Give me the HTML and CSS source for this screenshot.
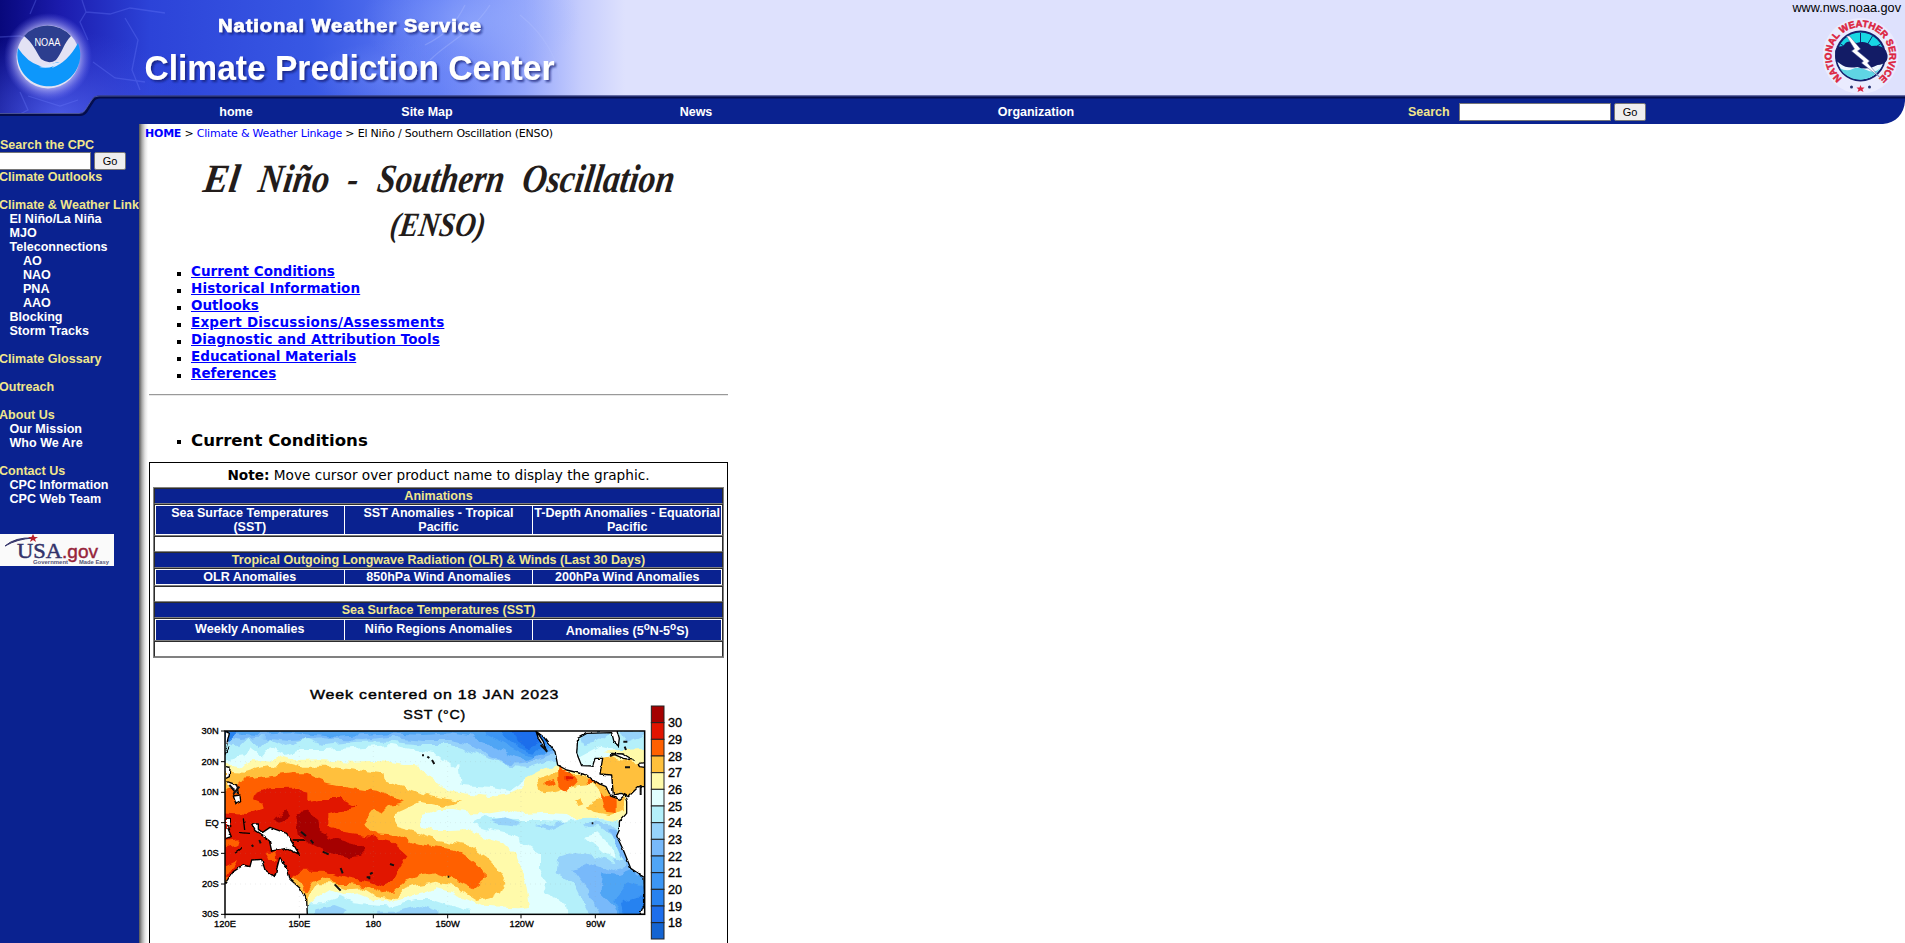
FILE: index.html
```html
<!DOCTYPE html>
<html lang="en">
<head>
<meta charset="utf-8">
<title>Climate Prediction Center - ENSO</title>
<link rel="stylesheet" href="styles.css">
</head>
<body>
<header class="header">
  <svg class="art" width="1905" height="124" viewBox="0 0 1905 124">
    <defs>
      <linearGradient id="sky" x1="0" x2="1">
        <stop offset="0" stop-color="#08087c"/><stop offset=".1" stop-color="#1c1cae"/><stop offset=".24" stop-color="#2c43d8"/>
        <stop offset=".5" stop-color="#3858e4"/><stop offset=".7" stop-color="#5f7bf5"/><stop offset=".84" stop-color="#93a5fb"/>
        <stop offset=".93" stop-color="#c6cdfd"/><stop offset="1" stop-color="#dee1fd"/>
      </linearGradient>
      <radialGradient id="low"><stop offset="0" stop-color="#5264ee" stop-opacity=".85"/><stop offset="1" stop-color="#3a4be0" stop-opacity="0"/></radialGradient>
      <radialGradient id="halo"><stop offset=".6" stop-color="#eef" stop-opacity=".9"/><stop offset="1" stop-color="#77f" stop-opacity="0"/></radialGradient>
      <radialGradient id="mist"><stop offset="0" stop-color="#9db4ff" stop-opacity=".5"/><stop offset="1" stop-color="#9db4ff" stop-opacity="0"/></radialGradient>
      <filter id="shadow" x="-5%" y="-20%" width="110%" height="150%"><feDropShadow dx="2" dy="2" stdDeviation="1.2" flood-color="#101c70" flood-opacity=".75"/></filter>
    </defs>
    <rect width="1905" height="124" fill="#dee1fd"/>
    <rect width="625" height="124" fill="url(#sky)"/>
    <ellipse cx="60" cy="115" rx="130" ry="85" fill="url(#low)"/>
    <ellipse cx="470" cy="20" rx="110" ry="55" fill="url(#mist)"/>
    <ellipse cx="400" cy="75" rx="90" ry="35" fill="url(#mist)" opacity=".5"/>
    <g fill="none" stroke="#6f80ff" stroke-width="1.3" opacity=".3">
      <path d="M82 0 86 12 80 22 88 40M86 12 110 14 130 8 165 13M0 37 20 36 38 44M125 18 138 40 132 70 140 90M93 62 115 78 145 82M20 92 28 110 12 118M28 96 60 106 78 100M36 0 30 14"/>
      <path d="M430 60C450 40 470 35 490 5M425 45C445 35 455 25 465 5M520 15C545 35 558 60 560 80" stroke="#b5c4ff"/>
    </g>
    <path d="M0 114H80Q84 114 86 111L93 100Q95 96 100 96H1905V124H0Z" fill="#0a2290"/>
    <path d="M0 114.500H80Q84 114.500 86 111.500L93 100.500Q95 97 100 97H1905" fill="none" stroke="#040d4c" stroke-width="3"/>
    <path d="M0 113.500H79Q83 113.500 85 110.500L92 99.500Q94 96 99 96H1905" fill="none" stroke="#5a64a8" stroke-width="1" opacity=".8"/>
    <path d="M1905 101C1904 114 1896 123 1883 124H1905Z" fill="#fff"/>
    <circle cx="48" cy="57" r="44" fill="url(#halo)"/>
    <circle cx="48" cy="57" r="31.500" fill="#e3e2f4"/>
    <path d="M24 36A31.500 31.500 0 0 1 71 36C64 43 62 53 56 60Q49 65 41 59C35 50 33 43 24 36Z" fill="#2c3e8f"/>
    <path d="M18 48Q27 62 40 66C46 70 52 62 60 62Q54 65 52 68Q68 62 78 43A31.500 31.500 0 1 1 18 48Z" fill="#0d97fb"/>
    <path d="M39 67Q51 70 61 62Q53 63 48 65Z" fill="#dfeaff"/>
    <text x="34.500" y="45.500" class="noaa" textLength="26" lengthAdjust="spacingAndGlyphs">NOAA</text>
    <g filter="url(#shadow)" class="brand">
      <text x="218" y="31.500" font-size="17.500" letter-spacing=".8" textLength="264" lengthAdjust="spacingAndGlyphs" stroke="#fff" stroke-width=".6">National Weather Service</text>
      <text x="144.500" y="80" font-size="34.500" textLength="410" lengthAdjust="spacingAndGlyphs">Climate Prediction Center</text>
    </g>
    <g transform="translate(1860.500 56)">
      <circle r="38" fill="#f1f1ff" opacity=".6"/>
      <circle r="25.500" fill="#17206e"/><circle r="23.500" fill="#18d7e4"/>
      <path d="M0-23V0M-12-20 0 0M12-20 0 0M-20-12 0 0M20-12 0 0" stroke="#10276f" stroke-width="1"/>
      <path d="M-23 6Q0 2 23 6A24 24 0 0 1-23 6Z" fill="#eef8ff"/>
      <path d="M-21 12Q-14 16-8 13T6 14T20 12A24 24 0 0 1-17 17Z" fill="#5fd5e4"/>
      <path d="M-25-1Q-27-10-17-10Q-14-17-4-13Q5-16 11-10Q25-12 27-1Q28 8 17 9Q6 15-3 11Q-14 13-20 8Q-26 5-25-1Z" fill="#131c66"/>
      <path d="M-14-20-6-7-9-5 3 5 1 7 19 21 7 7 9 5-3-5 0-7-11-20Z" fill="#fff" stroke="#4c5b9a" stroke-width=".5"/>
      <path id="ring" d="M-18.500 22.300A29 29 0 1 1 18.500 22.300" fill="none"/>
      <text class="seal"><textPath href="#ring" textLength="142" lengthAdjust="spacing">NATIONAL WEATHER SERVICE</textPath></text>
      <path d="M0 29 1 31.500 4 31.500 2 33.500 3 36 0 34.500-3 36-2 33.500-4 31.500-1 31.500Z" fill="#dc2440"/>
      <circle cx="-9" cy="31" r="1.500" fill="#273272"/><circle cx="9" cy="31" r="1.500" fill="#273272"/>
    </g>
  </svg>
  <div class="site">www.nws.noaa.gov</div>
  <nav class="nav">
    <a class="n1">home</a><a class="n2">Site Map</a><a class="n3">News</a><a class="n4">Organization</a>
    <form class="find"><label>Search</label><input class="field"><button class="go" type="button">Go</button></form>
  </nav>
</header>
<div class="page">
  <aside class="side">
    <p class="y s">Search the CPC</p>
    <form class="cpc"><input class="field"><button class="go" type="button">Go</button></form>
    <p class="y">Climate Outlooks</p>
    <p class="y gap">Climate &amp; Weather Link</p>
    <p class="i">El Niño/La Niña</p><p class="i">MJO</p><p class="i">Teleconnections</p>
    <p class="j">AO</p><p class="j">NAO</p><p class="j">PNA</p><p class="j">AAO</p>
    <p class="i">Blocking</p><p class="i">Storm Tracks</p>
    <p class="y gap">Climate Glossary</p>
    <p class="y gap">Outreach</p>
    <p class="y gap">About Us</p><p class="i">Our Mission</p><p class="i">Who We Are</p>
    <p class="y gap">Contact Us</p><p class="i">CPC Information</p><p class="i">CPC Web Team</p>
    <svg class="usa" width="114" height="32" viewBox="0 0 114 32">
      <rect width="114" height="32" fill="#fafafa"/>
      <path d="M5 12Q15 3 33 4Q17 5 5 12Z" fill="#36366b" stroke="#36366b"/>
      <path d="M33 0 34.500 3 38 3 35 5 36 8 33 6 30 8 31 5 28 3 31.500 3Z" fill="#b8202c"/>
      <text x="17" y="24" class="usa1" textLength="45" lengthAdjust="spacingAndGlyphs">USA</text>
      <text x="62" y="24" class="usa2" textLength="36" lengthAdjust="spacingAndGlyphs">.gov</text>
      <text x="33" y="30" class="usa3" textLength="35" lengthAdjust="spacingAndGlyphs">Government</text><text x="79" y="30" class="usa3" textLength="30" lengthAdjust="spacingAndGlyphs">Made Easy</text>
    </svg>
  </aside>
  <main class="main">
    <p class="crumb"><b>HOME</b> &gt; <a>Climate &amp; Weather Linkage</a> &gt; El Niño / Southern Oscillation (ENSO)</p>
    <svg class="title" width="500" height="100" viewBox="190 150 500 100">
      <g transform="translate(0 192) skewX(-8)">
        <text x="202" textLength="36" lengthAdjust="spacingAndGlyphs">El</text>
        <text x="257" textLength="71" lengthAdjust="spacingAndGlyphs">Niño</text>
        <text x="346" textLength="11" lengthAdjust="spacingAndGlyphs">-</text>
        <text x="376" textLength="127" lengthAdjust="spacingAndGlyphs">Southern</text>
        <text x="521" textLength="152" lengthAdjust="spacingAndGlyphs">Oscillation</text>
      </g>
      <g transform="translate(0 236) skewX(-8)"><text class="sub" x="389" textLength="95" lengthAdjust="spacingAndGlyphs">(ENSO)</text></g>
    </svg>
    <ul class="links">
      <li><a>Current Conditions</a></li><li class="w1"><a>Historical Information</a></li><li><a>Outlooks</a></li>
      <li class="w2"><a>Expert Discussions/Assessments</a></li><li class="w1"><a>Diagnostic and Attribution Tools</a></li>
      <li><a>Educational Materials</a></li><li><a>References</a></li>
    </ul>
    <div class="rule"></div>
    <h2 class="head">Current Conditions</h2>
    <section class="box">
      <p class="note"><b>Note:</b> Move cursor over product name to display the graphic.</p>
      <div class="tbl">
        <div class="row cap">Animations</div>
        <div class="row prod tall"><span>Sea Surface Temperatures<br>(SST)</span><span>SST Anomalies - Tropical<br>Pacific</span><span>T-Depth Anomalies - Equatorial<br>Pacific</span></div>
        <div class="row"></div>
        <div class="row cap">Tropical Outgoing Longwave Radiation (OLR) &amp; Winds (Last 30 Days)</div>
        <div class="row prod"><span>OLR Anomalies</span><span>850hPa Wind Anomalies</span><span>200hPa Wind Anomalies</span></div>
        <div class="row"></div>
        <div class="row cap">Sea Surface Temperatures (SST)</div>
        <div class="row prod mid"><span>Weekly Anomalies</span><span>Niño Regions Anomalies</span><span class="deg">Anomalies (5<sup>o</sup>N-5<sup>o</sup>S)</span></div>
        <div class="row"></div>
      </div>
      <svg class="map" width="538" height="273" viewBox="0 0 1614 819">
        <defs>
          <clipPath id="frame"><rect x="105" y="183" width="1259" height="550"/></clipPath>
          <filter id="rough" x="0" y="0" width="100%" height="100%"><feTurbulence type="fractalNoise" baseFrequency=".03" numOctaves="2" seed="4"/><feDisplacementMap in="SourceGraphic" scale="26" xChannelSelector="R" yChannelSelector="G"/></filter>
          <filter id="coast" x="0" y="0" width="100%" height="100%"><feTurbulence type="fractalNoise" baseFrequency=".06" numOctaves="2" seed="8"/><feDisplacementMap in="SourceGraphic" scale="9" xChannelSelector="R" yChannelSelector="G"/></filter>
        </defs>
        <g clip-path="url(#frame)">
          <g filter="url(#rough)">
            <rect x="60" y="140" width="1350" height="640" fill="#e1ffff"/>
            <!-- northern cool water -->
            <path fill="#b4f0fa" d="M60 140H1410V250H1330L1230 230 1100 300 1060 300 1010 325 960 360 900 350 812 345 805 285 790 290 740 250 680 240 600 225 480 235 400 240 330 240 290 255 240 232 215 262 175 230 160 262 60 278Z"/>
            <path fill="#96d2fa" d="M60 140H1130V265L1060 280 1010 297 960 290 930 275 880 262 840 243 780 225 700 225 600 215 500 215 400 225 350 205 290 225 240 205 210 235 180 205 150 235 130 215 60 250Z"/>
            <path fill="#78b9fa" d="M60 140H1130V250L1080 255 1010 280 960 285 890 255 840 225 780 210 700 210 600 200 520 210 400 205 300 210 250 205 200 200 160 210 125 205 60 228Z"/>
            <path fill="#50a5f5" d="M60 140H1110V235L1060 250 1010 270 960 255 900 222 840 198 780 190 700 195 600 190 440 200 300 190 200 195 140 190 60 215Z"/>
            <path fill="#3c96f5" d="M860 140H1080V235L1030 262 990 245 940 218 880 190Z"/>
            <path fill="#2882f0" d="M900 140H1070V225L1030 248 990 235 945 200Z"/>
            <path fill="#1e6eeb" d="M950 140H1060V215L1015 235 980 215Z"/><path fill="#2882f0" d="M105 183H145L118 210 105 220Z"/>
            <!-- south pacific and equatorial cold tongue -->
            <path fill="#b4f0fa" d="M845 460 880 440 930 448 980 450 1060 450 1130 455 1190 445 1280 450 1400 560V760H1140L1130 700 1060 670 1070 640 1050 600 1050 550 1000 520 960 490 890 475Z"/>
            <path fill="#96d2fa" d="M900 455 940 445 990 458 985 470 930 465ZM1035 465 1060 460 1080 468 1120 455 1130 460 1090 478ZM1185 460 1250 455 1300 500 1400 600V760H1210L1180 700 1150 640 1100 610 1105 560 1150 545 1220 560 1280 580Z"/>
            <path fill="#b4f0fa" d="M1160 475 1225 468 1275 500 1300 570 1240 560Z"/>
            <path fill="#e1ffff" d="M1185 500 1225 490 1265 530 1275 565 1240 550Z"/>
            <path fill="#78b9fa" d="M1260 480 1290 490 1320 590 1400 620V760H1240L1215 700 1180 640 1150 600 1210 580 1270 600 1310 590Z"/>
            <path fill="#50a5f5" d="M1240 610 1290 615 1330 600 1400 650V760H1290L1270 710 1230 670Z"/>
            <path fill="#3c96f5" d="M1270 690 1310 640 1350 650 1400 640V760H1300Z"/><path fill="#2882f0" d="M1290 700 1340 680 1400 660V760H1310Z"/>
            <path fill="#b4f0fa" d="M350 700 400 700 450 680 490 700 540 705 600 710 680 690 730 690 790 710 840 722V760H340Z"/>
            <path fill="#96d2fa" d="M380 715 430 705 470 720 460 735 370 740ZM560 725 620 725 690 705 750 725 740 740 550 745Z"/>
            <!-- warm pool -->
            <path fill="#fffaaa" d="M60 275 150 290 190 270 240 275 265 255 310 270 400 268 480 275 560 272 640 285 690 290 705 315 740 335 770 360 840 372 900 378 960 368 1000 350 1010 320 1060 295 1130 285 1330 330V430L1290 455 1230 445 1160 448 1130 432 1060 428 1000 433 960 420 900 430 840 430 790 420 740 420 695 435 690 470 730 480 780 480 840 477 880 502 940 520 980 560 995 600 1010 650 1020 710 980 715 880 710 840 690 780 665 740 655 700 670 640 682 600 695 560 690 510 670 460 675 420 660 385 680 350 710 60 700Z"/>
            <path fill="#ffc03c" d="M60 300 160 308 220 290 300 280 340 290 420 290 500 300 580 310 585 335 640 350 690 370 770 390 820 397 760 410 690 395 640 420 612 432 612 450 625 475 680 490 740 510 840 528 890 560 920 590 945 630 930 670 860 690 820 665 780 645 740 635 680 645 640 660 610 690 560 680 520 655 470 658 420 640 380 640 360 670 350 700 60 650Z"/>
            <path fill="#ffc03c" d="M1045 325 1110 300 1180 315 1240 340 1300 380 1305 420 1260 435 1210 425 1190 410 1240 380 1210 345 1150 350 1100 365 1060 370ZM1150 395 1170 385 1180 400 1165 405Z"/>
            <path fill="#ff6000" d="M60 375 110 370 150 330 200 325 300 310 350 310 410 335 480 350 560 362 600 378 645 395 600 405 575 430 550 420 530 445 520 470 560 490 620 495 680 520 740 530 800 540 830 560 880 600 885 625 850 655 800 630 740 610 700 615 650 630 610 665 580 670 540 650 480 642 440 642 400 622 365 635 345 670 320 620 60 640Z"/>
            <path fill="#ff6000" d="M1105 295 1140 305 1160 335 1130 365 1105 350ZM1065 338 1085 330 1095 340 1075 348ZM1190 325 1230 330 1230 345 1195 345ZM1235 370 1280 385 1280 430 1245 425Z"/>
            <path fill="#e11400" d="M60 425 170 432 225 415 220 398 195 388 200 368 240 352 310 350 355 370 355 397 400 387 450 387 500 410 460 417 415 430 415 470 470 490 540 500 600 515 650 560 630 590 610 630 580 648 540 635 470 622 400 602 330 602 310 620 60 620ZM1130 318 1142 320 1140 330 1130 332Z"/>
            <path fill="#a50000" d="M320 430 350 425 385 450 390 485 430 505 520 530 520 557 480 562 420 550 360 520 330 500 325 465ZM250 445 292 420 300 442 270 455Z"/>
            <path fill="#ff6000" d="M105 512 150 508 145 525 105 535ZM225 545 255 545 260 570 235 570ZM105 590 145 570 110 625Z"/>
            <!-- gulf and caribbean -->
            <path fill="#ffc03c" d="M1225 265 1300 250 1400 290V370H1260V315H1220Z"/>
            <path fill="#fffaaa" d="M1240 245 1290 240 1400 235V290L1330 275 1270 260Z"/><path fill="#96d2fa" d="M1170 190 1260 185 1220 215 1180 225ZM1290 180H1400L1310 220Z"/>
          </g>
          <g filter="url(#coast)" fill="#fff" stroke="#000" stroke-width="4" stroke-linejoin="round">
            <path d="M90 645 105 640 130 605 160 585 180 590 185 570 215 568 225 600 255 620 262 590 270 560 280 580 292 595 300 628 330 655 350 690 353 760H90Z"/>
            <path d="M185 462 205 462 205 478 218 487 240 472 290 490 305 515 328 553 290 535 245 543 238 512 215 495 195 482Z"/>
            <path d="M308 510 345 510M108 185 118 190 108 235M104 255 118 230M108 290 120 292 118 320 108 325M112 335 140 345 145 370 120 355M130 378 150 375 152 395 138 402ZM108 445 122 445 122 470 110 465 124 500 108 505M160 445 164 480M135 550 155 535M150 488 180 490"/>
            <path d="M1030 160 1045 205 1070 245 1060 215 1040 185 1060 200 1095 245 1103 285 1130 300 1190 315 1220 338 1248 350 1262 378 1290 388 1305 375 1310 395 1310 430 1288 455 1288 480 1280 498 1300 540 1322 595 1362 622 1364 700 1350 733H1400V350H1345L1330 365 1315 380 1295 370 1270 375 1265 315 1230 312 1238 265 1215 265 1208 288 1175 287 1160 250 1163 205 1190 190 1265 188 1272 215 1285 228 1288 205 1275 160Z"/>
            <path d="M1265 250 1300 252 1330 270 1300 265ZM1345 280 1365 278V292L1348 290Z"/>
          </g>
          <path d="M1300 215H1312M1304 230 1308 240M1260 258 1275 252M1305 292H1320M1352 345V375M1205 460H1210M1052 225 1072 245M696 256H702M712 260 718 264M726 270 733 282M333 485 348 498M362 510 370 520M398 545 416 553M452 594 458 610M434 643 452 662M600 582 612 586M530 622H538V628M773 620H778M185 525 190 530M208 510 212 520M540 612 548 608M130 372 148 350M118 345 132 360" fill="none" stroke="#111" stroke-width="6"/>
          <path d="M105 275H1364M105 367H1364M105 458H1364M105 550H1364M105 642H1364M328 183V733M550 183V733M773 183V733M993 183V733M1216 183V733" stroke="#999" stroke-width="1" stroke-dasharray="3 12" opacity=".5"/>
        </g>
        <rect x="105" y="183" width="1259" height="550" fill="none" stroke="#000" stroke-width="4.500"/>
        <path d="M93 183H105M93 275H105M93 367H105M93 458H105M93 550H105M93 642H105M93 733H105M105 733V745M328 733V745M550 733V745M773 733V745M993 733V745M1216 733V745" stroke="#000" stroke-width="3"/>
        <g class="hd"><text x="360" y="88" textLength="748" lengthAdjust="spacingAndGlyphs">Week centered on 18 JAN 2023</text><text x="640" y="148" textLength="188" lengthAdjust="spacingAndGlyphs">SST (°C)</text></g>
        <g class="ax" text-anchor="end"><text x="86" y="193">30N</text><text x="86" y="284">20N</text><text x="86" y="376">10N</text><text x="86" y="467">EQ</text><text x="86" y="559">10S</text><text x="86" y="651">20S</text><text x="86" y="742">30S</text></g>
        <g class="ax" text-anchor="middle"><text x="105" y="770">120E</text><text x="328" y="770">150E</text><text x="550" y="770">180</text><text x="773" y="770">150W</text><text x="995" y="770">120W</text><text x="1217" y="770">90W</text></g>
        <g stroke="#222" stroke-width="3">
          <rect x="1384" y="108" width="38" height="50" fill="#a50000"/><rect x="1384" y="158" width="38" height="50" fill="#e11400"/><rect x="1384" y="208" width="38" height="50" fill="#ff6000"/><rect x="1384" y="258" width="38" height="50" fill="#ffc03c"/><rect x="1384" y="308" width="38" height="50" fill="#fffaaa"/><rect x="1384" y="358" width="38" height="50" fill="#e1ffff"/><rect x="1384" y="408" width="38" height="50" fill="#b4f0fa"/><rect x="1384" y="458" width="38" height="50" fill="#96d2fa"/><rect x="1384" y="508" width="38" height="50" fill="#78b9fa"/><rect x="1384" y="558" width="38" height="50" fill="#50a5f5"/><rect x="1384" y="608" width="38" height="50" fill="#3c96f5"/><rect x="1384" y="658" width="38" height="50" fill="#2882f0"/><rect x="1384" y="708" width="38" height="50" fill="#1e6eeb"/><rect x="1384" y="758" width="38" height="49" fill="#1464d2"/>
        </g>
        <g class="sc"><text x="1434" y="172">30</text><text x="1434" y="222">29</text><text x="1434" y="272">28</text><text x="1434" y="322">27</text><text x="1434" y="372">26</text><text x="1434" y="422">25</text><text x="1434" y="472">24</text><text x="1434" y="522">23</text><text x="1434" y="572">22</text><text x="1434" y="622">21</text><text x="1434" y="672">20</text><text x="1434" y="722">19</text><text x="1434" y="772">18</text></g>
      </svg>
    </section>
  </main>
</div>
</body>
</html>
```
FILE: styles.css
```css
* { box-sizing: border-box; }
body { margin: 0; height: 943px; overflow: hidden; background: #fff; font-family: "DejaVu Sans", Verdana, sans-serif; color: #000; }
p, h2, ul { margin: 0; padding: 0; }

.header { display: grid; height: 124px; grid-template-rows: 98px 26px; font: bold 12.5px "Liberation Sans", Arial, sans-serif; }
.art { grid-area: 1 / 1 / 3 / 2; display: block; }
.site { grid-area: 1 / 1; justify-self: end; padding: 1px 4px 0 0; font-weight: normal; font-size: 12.7px; line-height: 14px; z-index: 1; }
.nav { grid-area: 2 / 1; display: flex; align-items: center; color: #fff; z-index: 1; line-height: 14px; padding-top: 1px; }
.nav a { text-align: center; }
.n1 { width: 100px; margin-left: 186px; }
.n2 { width: 100px; margin-left: 91px; }
.n3 { width: 100px; margin-left: 169px; }
.n4 { width: 120px; margin-left: 230px; }
.find { display: flex; align-items: center; margin-left: 312px; color: #f0e68c; }
.find .field { width: 152px; margin-left: 9px; }
.find label { width: 42px; }
.field { height: 18px; border: 1px solid #767676; border-radius: 0; padding: 0; background: #fff; }
.go { width: 32px; height: 18px; margin-left: 3px; padding: 0; border: 1px solid #767676; border-radius: 2px; background: #efefef; font: 11px "Liberation Sans", Arial, sans-serif; color: #000; }
.brand { font-family: "Liberation Sans", Arial, sans-serif; font-weight: bold; fill: #fff; }
.noaa { font: 11px "Liberation Sans", sans-serif; fill: #fff; }
.seal { font: bold 9.5px "Liberation Sans", sans-serif; fill: #dc2440; stroke: #dc2440; stroke-width: .5px; }

.page { display: flex; height: 819px; }
.side { width: 139px; flex: none; overflow: hidden; background: #0a2290; padding-top: 14px; font: bold 12.55px/14px "Liberation Sans", Arial, sans-serif; color: #fff; white-space: nowrap; }
.side p { height: 14px; }
.y { color: #f0e68c; margin-left: -1px; }
.side .s { margin: 0; }
.gap { margin-top: 14px; }
.i { margin-left: 9.5px; }
.j { margin-left: 23px; }
.cpc { display: flex; height: 18px; }
.cpc .field { width: 92px; margin-left: -1px; border-left: 0; }
.usa { display: block; margin-top: 28px; }
.usa1 { font: 21px "Liberation Serif", serif; fill: #33336a; stroke: #33336a; stroke-width: .5px; }
.usa2 { font: 18px "Liberation Sans", sans-serif; fill: #96243a; stroke: #96243a; stroke-width: .4px; }
.usa3 { font: bold 6px "Liberation Sans", sans-serif; fill: #555577; }

.main { flex: 1; padding: 0 0 0 10px; background: linear-gradient(90deg, #555, #aaa 3px, #e4e4e4 6px, #fff 9px) left / 9px 100% no-repeat; display: flex; flex-direction: column; align-items: flex-start; }
.main > * { flex: none; }
.crumb { font-size: 11px; line-height: 14px; height: 14px; margin: 3px 0 0 -4px; white-space: nowrap; letter-spacing: -.21px; }
.crumb b, .crumb a { color: #00f; }
.title { display: block; margin: 9px 0 0 41px; overflow: visible; }
.title text { font: italic bold 40px "Liberation Serif", serif; fill: #231c1a; }
.title .sub { font-size: 34px; }
.links { list-style: none; margin-top: 13px; }
.links li { height: 17px; display: flex; align-items: center; font-weight: bold; font-size: 13.5px; line-height: 17px; white-space: nowrap; }
.links .w1 { letter-spacing: .1px; }
.links .w2 { letter-spacing: .19px; }
.links a { color: #00f; text-decoration: underline; }
.links li::before, .head::before { content: ""; width: 4px; height: 4px; background: #000; margin: 4px 10px 0 28px; flex: none; }
.rule { width: 579px; height: 2px; background: #999; border-bottom: 1px solid #e8e8e8; margin-top: 12px; }
.head { display: flex; align-items: center; height: 20px; margin-top: 34px; font-size: 16.6px; }
.box { width: 579px; height: 520px; margin-top: 12px; border: 1px solid #000; padding: 3px 3px 0; }
.note { height: 21px; line-height: 19px; text-align: center; font-size: 13.65px; white-space: nowrap; }
.tbl { width: 571px; border: 1px solid #808080; font: bold 12.55px/14px "Liberation Sans", Arial, sans-serif; text-align: center; white-space: nowrap; }
.row { height: 16px; border: 1px solid #2c2c2c; border-bottom-color: #808080; }
.cap { background: #0a2290; color: #f0e68c; }
.prod { display: grid; grid-template-columns: repeat(3, minmax(0, 1fr)); gap: 1px; height: 18px; background: #fff; padding: 1px; color: #fff; }
.prod span { background: #0a2290; }
.tall { height: 32px; }
.mid { height: 23px; line-height: 19px; }
.prod .deg { padding-top: 3px; line-height: 17px; }
sup { font-size: 10px; line-height: 0; }
.map { display: block; margin: 12px 0 0 37px; }
.hd { font: 39px "Liberation Sans", Arial, sans-serif; stroke: #000; stroke-width: 1.2px; letter-spacing: 2px; }
.ax { font: 28px "Liberation Sans", Arial, sans-serif; stroke: #000; stroke-width: 1px; }
.sc { font: 38px "Liberation Sans", Arial, sans-serif; stroke: #000; stroke-width: 1px; }
```
